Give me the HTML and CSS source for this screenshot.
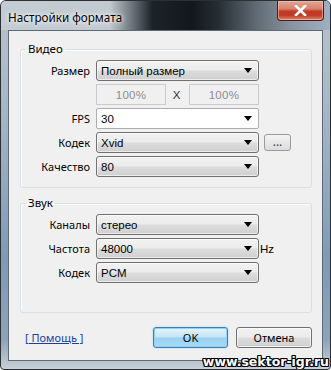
FILE: index.html
```html
<!DOCTYPE html>
<html lang="ru">
<head>
<meta charset="utf-8">
<title>Настройки формата</title>
<link rel="stylesheet" href="styles.css">
</head>
<body>
<div class="window">
  <div class="titlebar">
    <span class="title">Настройки формата</span>
    <div class="close"><svg width="13" height="11" viewBox="0 0 13 11"><path d="M2 1 L11 10 M11 1 L2 10" stroke="#fff" stroke-width="2.6" stroke-linecap="square"/></svg></div>
  </div>
  <div class="client">
    <fieldset class="group group-video">
      <legend>Видео</legend>
      <div class="row">
        <span class="lbl">Размер</span>
        <div class="combo"><span>Полный размер</span><svg class="arr" width="8" height="5" viewBox="0 0 8 5"><path d="M0 0H8L4 5Z"/></svg></div>
      </div>
      <div class="row">
        <span class="lbl"></span>
        <div class="pct">
          <div class="edit">100%</div>
          <span class="x">X</span>
          <div class="edit">100%</div>
        </div>
      </div>
      <div class="row">
        <span class="lbl">FPS</span>
        <div class="combo combo-edit"><span>30</span><svg class="arr" width="8" height="5" viewBox="0 0 8 5"><path d="M0 0H8L4 5Z"/></svg></div>
      </div>
      <div class="row">
        <span class="lbl">Кодек</span>
        <div class="combo"><span>Xvid</span><svg class="arr" width="8" height="5" viewBox="0 0 8 5"><path d="M0 0H8L4 5Z"/></svg></div>
        <div class="dots">...</div>
      </div>
      <div class="row">
        <span class="lbl">Качество</span>
        <div class="combo"><span>80</span><svg class="arr" width="8" height="5" viewBox="0 0 8 5"><path d="M0 0H8L4 5Z"/></svg></div>
      </div>
    </fieldset>
    <fieldset class="group group-audio">
      <legend>Звук</legend>
      <div class="row">
        <span class="lbl">Каналы</span>
        <div class="combo"><span>стерео</span><svg class="arr" width="8" height="5" viewBox="0 0 8 5"><path d="M0 0H8L4 5Z"/></svg></div>
      </div>
      <div class="row">
        <span class="lbl">Частота</span>
        <div class="combo"><span>48000</span><svg class="arr" width="8" height="5" viewBox="0 0 8 5"><path d="M0 0H8L4 5Z"/></svg></div>
        <span class="unit">Hz</span>
      </div>
      <div class="row">
        <span class="lbl">Кодек</span>
        <div class="combo"><span>PCM</span><svg class="arr" width="8" height="5" viewBox="0 0 8 5"><path d="M0 0H8L4 5Z"/></svg></div>
      </div>
    </fieldset>
    <div class="footer">
      <a class="help" href="#">[ Помощь ]</a>
      <div class="buttons">
        <div class="btn btn-default">OK</div>
        <div class="btn">Отмена</div>
      </div>
    </div>
  </div>
  <div class="watermark">www.sektor-igr.ru</div>
</div>
</body>
</html>
```

FILE: styles.css
```css
* { box-sizing: border-box; }
html, body { margin: 0; padding: 0; background: #ffffff; }
body {
  font-family: "Noto Sans", "Open Sans", sans-serif;
  font-size: 11px;
  color: #000;
}
.window {
  position: relative;
  width: 331px;
  height: 370px;
  border: 1px solid #2b3034;
  border-radius: 6px 6px 4px 4px;
  padding: 0 7px 10px 7px;
  background: linear-gradient(180deg, #b9c3cd 0%, #a7b6c6 30%, #7f9ab6 70%, #8ea3b8 92%, #c8d0d8 100%);
  overflow: hidden;
}
.window::before {
  content: "";
  position: absolute;
  left: 0; right: 0; top: 0; height: 29px;
  background: linear-gradient(90deg, #c4ccd3 0%, #c2cad1 33%, #5e666d 41%, #1c2329 46%, #11171c 58%, #262e35 66%, #626c75 78%, #8893a0 88%, #9fb0c2 100%);
  z-index: 0;
}
.titlebar {
  position: relative;
  z-index: 1;
  height: 28px;
  display: flex;
  justify-content: space-between;
  align-items: flex-start;
}
.title {
  margin-top: 8px;
  font-size: 11.7px;
  color: #000;
  text-shadow: 0 0 6px #ffffff, 0 0 3px #ffffff;
}
.close {
  width: 47px;
  height: 20px;
  margin-right: -1px;
  border: 1px solid #4a1c14;
  border-top: none;
  border-radius: 0 0 4px 4px;
  background: linear-gradient(180deg, #e3a595 0%, #d78470 40%, #c33a22 55%, #bf3b25 75%, #d98a70 100%);
  box-shadow: inset 0 0 0 1px rgba(255,200,190,0.55);
  display: flex;
  align-items: center;
  justify-content: center;
}
.client {
  position: relative;
  z-index: 1;
  height: 331px;
  margin-top: 1px;
  background: #f0f0f0;
  border: 1px solid #5f6a75;
  padding: 0 10px 0 11px;
  display: flex;
  flex-direction: column;
}
.group {
  margin: 0;
  border: 1px solid #d5dfe5;
  border-radius: 3px;
  padding: 4px 0 10px 0;
  min-width: 0;
  display: flex;
  flex-direction: column;
  gap: 3px;
  box-shadow: inset 1px 1px 0 #ffffff;
}
.group legend {
  margin-left: 5px;
  padding: 0 2px;
  line-height: 14px;
  font-size: 11.5px;
}
.group-video { margin-top: 11px; }
.group-audio { margin-top: 8px; padding-bottom: 29px; }
.row {
  display: grid;
  grid-template-columns: 69px 163px auto;
  column-gap: 6px;
  align-items: center;
  height: 21px;
}
.lbl {
  text-align: right;
  white-space: nowrap;
  color: #000;
}
.combo {
  height: 21px;
  border: 1px solid #707070;
  border-radius: 3px;
  background: linear-gradient(180deg, #f2f2f2 0%, #ebebeb 48%, #dddddd 52%, #cfcfcf 100%);
  box-shadow: inset 0 0 0 1px rgba(255,255,255,0.6);
  display: flex;
  align-items: center;
  justify-content: space-between;
  padding: 0 6px 0 4px;
  white-space: nowrap;
  font-family: "Liberation Sans", Arial, sans-serif;
  font-size: 11.5px;
}
.combo-edit {
  background: #ffffff;
  border-color: #abadb3;
  border-radius: 2px;
  box-shadow: none;
}
.arr { fill: #000; flex: none; }
.pct {
  display: flex;
  justify-content: space-between;
  align-items: center;
}
.edit {
  width: 70px;
  height: 21px;
  border: 1px solid #c7cbd0;
  background: #f0f0f0;
  color: #8d8d8d;
  display: flex;
  align-items: center;
  justify-content: center;
  font-family: "Liberation Sans", Arial, sans-serif;
  font-size: 11.5px;
  letter-spacing: 0.3px;
}
.x { color: #333; padding-right: 2px; font-family: "Liberation Sans", Arial, sans-serif; font-size: 11.5px; }
.dots {
  width: 27px;
  height: 17px;
  margin-left: -1px;
  border: 1px solid #9a9a9a;
  border-radius: 3px;
  background: linear-gradient(180deg, #f4f4f4 0%, #e8e8e8 50%, #dcdcdc 100%);
  color: #444;
  font-size: 12px;
  line-height: 13px;
  text-align: center;
}
.unit { margin-left: -5px; font-family: "Liberation Sans", Arial, sans-serif; font-size: 11.5px; }
.footer {
  margin-top: 14px;
  display: flex;
  justify-content: space-between;
  align-items: center;
  padding-left: 5px;
}
.help {
  color: #1a3ea8;
  text-decoration: underline;
  margin-top: -1px;
}
.buttons {
  display: flex;
  gap: 8px;
}
.btn {
  width: 76px;
  height: 21px;
  border: 1px solid #707070;
  border-radius: 3px;
  background: linear-gradient(180deg, #f2f2f2 0%, #ebebeb 48%, #dddddd 52%, #cfcfcf 100%);
  box-shadow: inset 0 0 0 1px rgba(255,255,255,0.7);
  display: flex;
  align-items: center;
  justify-content: center;
}
.btn-default {
  width: 75px;
  border-color: #3c7fb1;
  background: linear-gradient(180deg, #e5f4fc 0%, #c4e5f6 48%, #98d1ef 52%, #a8dcf6 100%);
  box-shadow: inset 0 0 0 1px #8fd0f4, 0 0 2px #9cd4f2;
}
.watermark {
  position: absolute;
  right: 1px;
  bottom: 0px;
  z-index: 2;
  font-family: "DejaVu Sans", sans-serif;
  font-weight: bold;
  font-size: 12.5px;
  line-height: 14px;
  color: #ffffff;
  text-shadow: 1px 0 0 #000, -1px 0 0 #000, 0 1px 0 #000, 0 -1px 0 #000, 1px 1px 0 #000, -1px -1px 0 #000, 1px -1px 0 #000, -1px 1px 0 #000;
}
```
